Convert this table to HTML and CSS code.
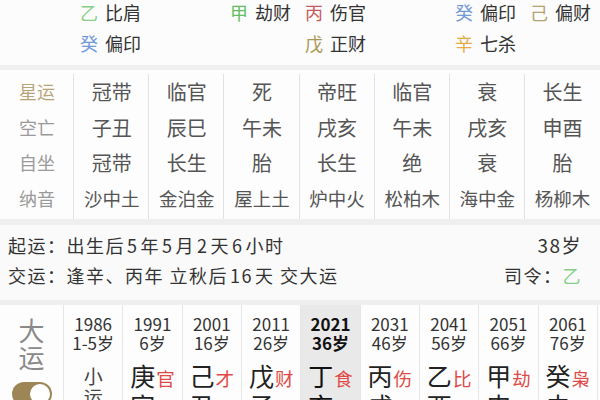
FILE: index.html
```html
<!DOCTYPE html>
<html lang="zh">
<head>
<meta charset="utf-8">
<link rel="stylesheet" href="styles.css">
</head>
<body>
<div class="hidden">
  <span class="hs c2 r1"><span class="stem yi">乙</span>比肩</span>
  <span class="hs c4 r1"><span class="stem jia">甲</span>劫财</span>
  <span class="hs c5 r1"><span class="stem bing">丙</span>伤官</span>
  <span class="hs c7 r1"><span class="stem gui">癸</span>偏印</span>
  <span class="hs c8 r1"><span class="stem ji">己</span>偏财</span>
  <span class="hs c2 r2"><span class="stem gui">癸</span>偏印</span>
  <span class="hs c5 r2"><span class="stem wu">戊</span>正财</span>
  <span class="hs c7 r2"><span class="stem xin">辛</span>七杀</span>
</div>
<div class="band"></div>
<div class="table">
  <div class="tcol labels">
    <div class="cell gold">星运</div>
    <div class="cell">空亡</div>
    <div class="cell">自坐</div>
    <div class="cell">纳音</div>
  </div>
  <div class="tcol data"><div class="cell">冠带</div><div class="cell">子丑</div><div class="cell">冠带</div><div class="cell ny">沙中土</div></div>
  <div class="tcol data"><div class="cell">临官</div><div class="cell">辰巳</div><div class="cell">长生</div><div class="cell ny">金泊金</div></div>
  <div class="tcol data"><div class="cell">死</div><div class="cell">午未</div><div class="cell">胎</div><div class="cell ny">屋上土</div></div>
  <div class="tcol data"><div class="cell">帝旺</div><div class="cell">戌亥</div><div class="cell">长生</div><div class="cell ny">炉中火</div></div>
  <div class="tcol data"><div class="cell">临官</div><div class="cell">午未</div><div class="cell">绝</div><div class="cell ny">松柏木</div></div>
  <div class="tcol data"><div class="cell">衰</div><div class="cell">戌亥</div><div class="cell">衰</div><div class="cell ny">海中金</div></div>
  <div class="tcol data"><div class="cell">长生</div><div class="cell">申酉</div><div class="cell">胎</div><div class="cell ny">杨柳木</div></div>
</div>
<div class="band band2"></div>
<div class="info">
  <div class="line"><span>起运：出生后<span class="num">5</span>年<span class="num">5</span>月<span class="num">2</span>天<span class="num">6</span>小时</span><span class="age">38岁</span></div>
  <div class="line"><span>交运：逢辛、丙年 立秋后<span class="num">16</span>天 交大运</span><span>司令：<span class="yi">乙</span></span></div>
</div>
<div class="band"></div>
<div class="dayun">
  <div class="dlabel">
    <div class="dtitle">大<br>运</div>
    <div class="toggle"><span class="knob"></span></div>
  </div>
  <div class="dcol"><div class="yr">1986</div><div class="yr">1-5岁</div><div class="xy">小<br>运</div></div>
  <div class="dcol"><div class="yr">1991</div><div class="yr">6岁</div><div class="gz"><div>庚<span class="ss">官</span></div><div>寅<span class="ss">劫</span></div></div></div>
  <div class="dcol"><div class="yr">2001</div><div class="yr">16岁</div><div class="gz"><div>己<span class="ss">才</span></div><div>丑<span class="ss">才</span></div></div></div>
  <div class="dcol"><div class="yr">2011</div><div class="yr">26岁</div><div class="gz"><div>戊<span class="ss">财</span></div><div>子<span class="ss">枭</span></div></div></div>
  <div class="dcol cur"><div class="yr">2021</div><div class="yr">36岁</div><div class="gz"><div>丁<span class="ss">食</span></div><div>亥<span class="ss">印</span></div></div></div>
  <div class="dcol"><div class="yr">2031</div><div class="yr">46岁</div><div class="gz"><div>丙<span class="ss">伤</span></div><div>戌<span class="ss">财</span></div></div></div>
  <div class="dcol"><div class="yr">2041</div><div class="yr">56岁</div><div class="gz"><div>乙<span class="ss">比</span></div><div>酉<span class="ss">杀</span></div></div></div>
  <div class="dcol"><div class="yr">2051</div><div class="yr">66岁</div><div class="gz"><div>甲<span class="ss">劫</span></div><div>申<span class="ss">官</span></div></div></div>
  <div class="dcol"><div class="yr">2061</div><div class="yr">76岁</div><div class="gz"><div>癸<span class="ss">枭</span></div><div>未<span class="ss">才</span></div></div></div>
  <div class="dcol"></div>
</div>
</body>
</html>
```
FILE: styles.css
```css
html, body {
  margin: 0;
  padding: 0;
  background: #fcfcfc;
}
body {
  width: 600px;
  height: 400px;
  overflow: hidden;
  font-family: "Noto Sans CJK SC", "Noto Sans", sans-serif;
  color: #333;
}

.hidden {
  display: grid;
  grid-template-columns: repeat(8, 75px);
  grid-template-rows: 24px 24px;
  row-gap: 7px;
  padding-bottom: 10px;
  font-size: 18px;
  line-height: 24px;
}
.hs { padding-left: 5px; white-space: nowrap; color: #333; }
.stem { margin-right: 7px; }
.c2 { grid-column: 2; }
.c4 { grid-column: 4; }
.c5 { grid-column: 5; }
.c7 { grid-column: 7; }
.c8 { grid-column: 8; }
.r1 { grid-row: 1; }
.r2 { grid-row: 2; }
.yi { color: #86cf86; }
.jia { color: #5fbf62; }
.bing { color: #c9585a; }
.gui { color: #7399d9; }
.ji { color: #b3a274; }
.wu { color: #ab9655; }
.xin { color: #e6ab45; }

.band { height: 5px; background: #efefef; }
.band2 { height: 6px; }

.table {
  display: flex;
  padding-top: 4px;
  background: #fdfdfd;
}
.tcol {
  width: 75px;
  padding-bottom: 3px;
  text-align: center;
}
.tcol.data { border-left: 1px solid #e2e2e2; margin-left: -1px; width: 76px; }
.cell {
  height: 35.5px;
  line-height: 35.5px;
  font-size: 20px;
  color: #555;
}
.labels .cell { font-size: 18px; color: #9a9a9a; }
.labels .cell.gold { color: #b8a479; }
.cell.ny { font-size: 18.5px; }

.info {
  padding: 5px 18px 10px 8px;
  font-size: 18px;
  line-height: 30px;
  color: #333;
  letter-spacing: 1.5px;
  background: #fafafa;
}
.line { display: flex; justify-content: space-between; }
.num { padding: 0 2px; }
.age { font-size: 19px; }

.dayun {
  display: flex;
  background: #fdfdfd;
}
.dlabel {
  width: 63px;
  flex: none;
  display: flex;
  flex-direction: column;
  align-items: center;
  padding-top: 11px;
}
.dtitle {
  font-size: 26px;
  line-height: 27px;
  color: #8a8a8a;
  text-align: center;
}
.toggle {
  margin-top: 12px;
  width: 40px;
  height: 24px;
  border-radius: 12px;
  background: #9c8656;
  display: flex;
  align-items: center;
  justify-content: flex-end;
  padding: 0 2px;
  box-sizing: border-box;
}
.knob {
  width: 20px;
  height: 20px;
  border-radius: 50%;
  background: #fff;
}
.dcol {
  width: 59.33px;
  flex: none;
  box-sizing: border-box;
  border-left: 1px solid #e6e6e6;
  text-align: center;
  padding-top: 9px;
  height: 110px;
}
.dcol.cur { background: #e9e9e9; }
.yr {
  font-size: 17px;
  line-height: 19px;
  color: #333;
}
.cur .yr { font-weight: bold; color: #111; }
.xy {
  margin-top: 13px;
  font-size: 19px;
  line-height: 21px;
  color: #444;
}
.gz {
  margin-top: 10px;
  font-size: 25px;
  line-height: 27px;
  color: #222;
}
.cur .gz { color: #111; }
.ss {
  font-size: 18.5px;
  color: #dd4a48;
  margin-left: 1px;
}
```
